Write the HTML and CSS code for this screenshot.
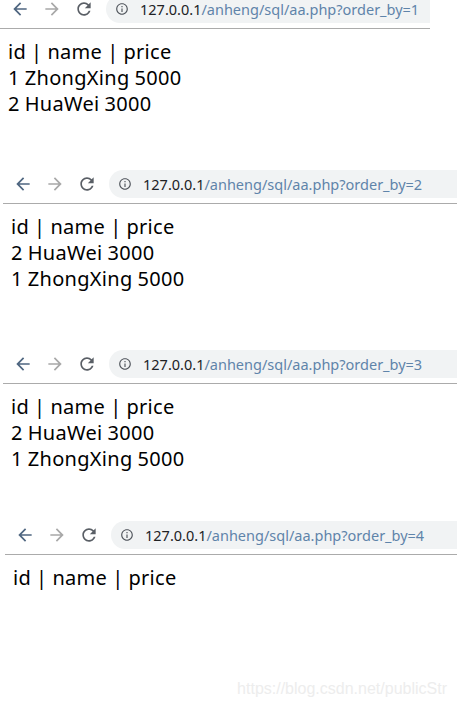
FILE: index.html
```html
<!DOCTYPE html>
<html>
<head>
<meta charset="utf-8">
<link rel="stylesheet" href="styles.css">
</head>
<body>
<div class="page">
  <section class="shot shot-1">
    <div class="toolbar">
      <svg class="nav back" viewBox="0 0 24 24"><path d="M20 11H7.83l5.59-5.59L12 4l-8 8 8 8 1.41-1.41L7.83 13H20v-2z"/></svg>
      <svg class="nav fwd" viewBox="0 0 24 24"><path d="M12 4l-1.41 1.41L16.17 11H4v2h12.17l-5.58 5.59L12 20l8-8z"/></svg>
      <svg class="nav reload" viewBox="0 0 24 24"><path d="M17.65 6.35C16.2 4.9 14.21 4 12 4c-4.42 0-7.99 3.58-7.99 8s3.57 8 7.99 8c3.73 0 6.84-2.55 7.73-6h-2.08c-.82 2.33-3.04 4-5.65 4-3.31 0-6-2.69-6-6s2.69-6 6-6c1.66 0 3.14.69 4.22 1.78L13 11h7V4l-2.35 2.35z"/></svg>
      <div class="omnibox">
        <svg class="info" viewBox="0 0 24 24"><path d="M11 7h2v2h-2zm0 4h2v6h-2zm1-9C6.48 2 2 6.48 2 12s4.48 10 10 10 10-4.48 10-10S17.52 2 12 2zm0 18c-4.41 0-8-3.590-8-8s3.59-8 8-8 8 3.59 8 8-3.59 8-8 8z"/></svg>
        <span class="url"><span class="host">127.0.0.1</span><span class="path">/anheng/sql/aa.php?order_by=1</span></span>
      </div>
    </div>
    <div class="result">
      <div>id | name | price</div>
      <div>1 ZhongXing 5000</div>
      <div>2 HuaWei 3000</div>
    </div>
  </section>

  <section class="shot shot-2">
    <div class="toolbar">
      <svg class="nav back" viewBox="0 0 24 24"><path d="M20 11H7.83l5.59-5.59L12 4l-8 8 8 8 1.41-1.41L7.83 13H20v-2z"/></svg>
      <svg class="nav fwd" viewBox="0 0 24 24"><path d="M12 4l-1.41 1.41L16.17 11H4v2h12.17l-5.58 5.59L12 20l8-8z"/></svg>
      <svg class="nav reload" viewBox="0 0 24 24"><path d="M17.65 6.35C16.2 4.9 14.21 4 12 4c-4.42 0-7.99 3.58-7.99 8s3.57 8 7.99 8c3.73 0 6.84-2.55 7.73-6h-2.08c-.82 2.33-3.04 4-5.65 4-3.31 0-6-2.69-6-6s2.69-6 6-6c1.66 0 3.14.69 4.22 1.78L13 11h7V4l-2.35 2.35z"/></svg>
      <div class="omnibox">
        <svg class="info" viewBox="0 0 24 24"><path d="M11 7h2v2h-2zm0 4h2v6h-2zm1-9C6.48 2 2 6.48 2 12s4.48 10 10 10 10-4.48 10-10S17.52 2 12 2zm0 18c-4.41 0-8-3.59-8-8s3.59-8 8-8 8 3.59 8 8-3.59 8-8 8z"/></svg>
        <span class="url"><span class="host">127.0.0.1</span><span class="path">/anheng/sql/aa.php?order_by=2</span></span>
      </div>
    </div>
    <div class="result">
      <div>id | name | price</div>
      <div>2 HuaWei 3000</div>
      <div>1 ZhongXing 5000</div>
    </div>
  </section>

  <section class="shot shot-3">
    <div class="toolbar">
      <svg class="nav back" viewBox="0 0 24 24"><path d="M20 11H7.83l5.59-5.59L12 4l-8 8 8 8 1.41-1.41L7.83 13H20v-2z"/></svg>
      <svg class="nav fwd" viewBox="0 0 24 24"><path d="M12 4l-1.41 1.41L16.17 11H4v2h12.17l-5.58 5.59L12 20l8-8z"/></svg>
      <svg class="nav reload" viewBox="0 0 24 24"><path d="M17.65 6.35C16.2 4.9 14.21 4 12 4c-4.42 0-7.99 3.58-7.99 8s3.57 8 7.99 8c3.73 0 6.84-2.55 7.73-6h-2.08c-.82 2.33-3.04 4-5.65 4-3.31 0-6-2.69-6-6s2.69-6 6-6c1.66 0 3.14.69 4.22 1.78L13 11h7V4l-2.35 2.35z"/></svg>
      <div class="omnibox">
        <svg class="info" viewBox="0 0 24 24"><path d="M11 7h2v2h-2zm0 4h2v6h-2zm1-9C6.48 2 2 6.48 2 12s4.48 10 10 10 10-4.48 10-10S17.52 2 12 2zm0 18c-4.41 0-8-3.59-8-8s3.59-8 8-8 8 3.59 8 8-3.59 8-8 8z"/></svg>
        <span class="url"><span class="host">127.0.0.1</span><span class="path">/anheng/sql/aa.php?order_by=3</span></span>
      </div>
    </div>
    <div class="result">
      <div>id | name | price</div>
      <div>2 HuaWei 3000</div>
      <div>1 ZhongXing 5000</div>
    </div>
  </section>

  <section class="shot shot-4">
    <div class="toolbar">
      <svg class="nav back" viewBox="0 0 24 24"><path d="M20 11H7.83l5.59-5.59L12 4l-8 8 8 8 1.41-1.41L7.83 13H20v-2z"/></svg>
      <svg class="nav fwd" viewBox="0 0 24 24"><path d="M12 4l-1.41 1.41L16.17 11H4v2h12.17l-5.58 5.59L12 20l8-8z"/></svg>
      <svg class="nav reload" viewBox="0 0 24 24"><path d="M17.65 6.35C16.2 4.9 14.21 4 12 4c-4.42 0-7.99 3.58-7.99 8s3.57 8 7.99 8c3.73 0 6.84-2.55 7.73-6h-2.08c-.82 2.33-3.04 4-5.65 4-3.31 0-6-2.69-6-6s2.69-6 6-6c1.66 0 3.14.69 4.22 1.78L13 11h7V4l-2.35 2.35z"/></svg>
      <div class="omnibox">
        <svg class="info" viewBox="0 0 24 24"><path d="M11 7h2v2h-2zm0 4h2v6h-2zm1-9C6.48 2 2 6.48 2 12s4.48 10 10 10 10-4.48 10-10S17.52 2 12 2zm0 18c-4.41 0-8-3.59-8-8s3.59-8 8-8 8 3.59 8 8-3.59 8-8 8z"/></svg>
        <span class="url"><span class="host">127.0.0.1</span><span class="path">/anheng/sql/aa.php?order_by=4</span></span>
      </div>
    </div>
    <div class="result">
      <div>id | name | price</div>
    </div>
  </section>

  <div class="watermark">https://blog.csdn.net/publicStr</div>
</div>
</body>
</html>
```

FILE: styles.css
```css
html, body {
  margin: 0;
  padding: 0;
  background: #ffffff;
}

.page {
  position: relative;
  width: 457px;
  height: 708px;
  overflow: hidden;
}

.shot {
  display: flex;
  flex-direction: column;
}

.shot-1 {
  margin-top: -5px;
  height: 175px;
  width: 430px;
}

.shot-2 {
  height: 180px;
  margin-left: 3px;
}

.shot-3 {
  height: 171px;
  margin-left: 3px;
}

.shot-4 {
  margin-left: 5px;
}

.toolbar {
  display: flex;
  align-items: center;
  height: 28px;
  padding: 0 0 5px 10px;
  border-bottom: 1px solid #ababab;
}

.nav {
  width: 20px;
  height: 20px;
  flex: none;
  margin-right: 12px;
}

.back path { fill: #4f6680; }
.fwd path { fill: #a8a8a8; }
.reload path { fill: #5a5f66; }

.omnibox {
  flex: 1;
  display: flex;
  align-items: center;
  height: 28px;
  background: #f1f3f4;
  border-radius: 14px 0 0 14px;
  padding-left: 9px;
}

.info {
  width: 14px;
  height: 14px;
  flex: none;
}

.info path { fill: #50555c; }

.url {
  margin-left: 11px;
  font-family: "Noto Sans", "Open Sans", sans-serif;
  font-size: 14.5px;
  white-space: nowrap;
}

.host { color: #202124; }
.path { color: #5f84aa; }

.result {
  padding: 10px 0 0 8px;
  font-family: "Noto Sans", "Open Sans", sans-serif;
  font-size: 20px;
  line-height: 26px;
  letter-spacing: 0.3px;
  word-spacing: -0.5px;
  color: #000000;
}

.watermark {
  position: absolute;
  right: 10px;
  top: 680px;
  font-family: "Liberation Sans", Arial, sans-serif;
  font-size: 16px;
  line-height: 18px;
  color: #ededed;
}
```
